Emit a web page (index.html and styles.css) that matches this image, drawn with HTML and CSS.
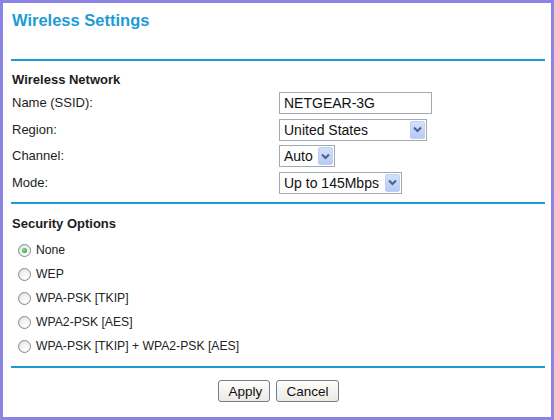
FILE: index.html
```html
<!DOCTYPE html>
<html lang="en">
<head>
<meta charset="utf-8">
<title>Wireless Settings</title>
<link rel="stylesheet" href="styles.css">
</head>
<body>
<div class="frame">
  <h1 class="title">Wireless Settings</h1>
  <hr class="rule rule-top">

  <h2 class="section-head section-head-network">Wireless Network</h2>
  <div class="form-grid">
    <label class="field-label" for="ssid">Name (SSID):</label>
    <input class="text-input" id="ssid" type="text" value="NETGEAR-3G">

    <span class="field-label">Region:</span>
    <div class="select select-region">
      <span class="select-value">United States</span>
      <span class="select-arrow"><svg width="9" height="7" viewBox="0 0 9 7"><path d="M1 1.5 L4.5 5 L8 1.5" fill="none" stroke="#4a5f8c" stroke-width="2"/></svg></span>
    </div>

    <span class="field-label">Channel:</span>
    <div class="select select-channel">
      <span class="select-value">Auto</span>
      <span class="select-arrow"><svg width="9" height="7" viewBox="0 0 9 7"><path d="M1 1.5 L4.5 5 L8 1.5" fill="none" stroke="#4a5f8c" stroke-width="2"/></svg></span>
    </div>

    <span class="field-label">Mode:</span>
    <div class="select select-mode">
      <span class="select-value">Up to 145Mbps</span>
      <span class="select-arrow"><svg width="9" height="7" viewBox="0 0 9 7"><path d="M1 1.5 L4.5 5 L8 1.5" fill="none" stroke="#4a5f8c" stroke-width="2"/></svg></span>
    </div>
  </div>

  <hr class="rule rule-mid">

  <h2 class="section-head section-head-security">Security Options</h2>
  <div class="radio-list">
    <label class="radio-row"><input class="radio" type="radio" name="sec" checked><span>None</span></label>
    <label class="radio-row"><input class="radio" type="radio" name="sec"><span>WEP</span></label>
    <label class="radio-row"><input class="radio" type="radio" name="sec"><span>WPA-PSK [TKIP]</span></label>
    <label class="radio-row"><input class="radio" type="radio" name="sec"><span>WPA2-PSK [AES]</span></label>
    <label class="radio-row"><input class="radio" type="radio" name="sec"><span>WPA-PSK [TKIP] + WPA2-PSK [AES]</span></label>
  </div>

  <hr class="rule rule-bottom">

  <div class="actions">
    <button class="btn btn-apply" type="button">Apply</button>
    <button class="btn btn-cancel" type="button">Cancel</button>
  </div>
</div>
</body>
</html>
```
FILE: styles.css
```css
body {
  margin: 0;
  background: #fff;
}

.frame {
  box-sizing: border-box;
  width: 554px;
  height: 420px;
  border: 3px solid #8c84e4;
  background: #fff;
  padding: 7px 6px 0 8px;
  font-family: "Liberation Sans", Arial, sans-serif;
  color: #1c1c1c;
}

.title {
  margin: 0;
  padding-left: 1px;
  font-size: 16.5px;
  line-height: 20px;
  font-weight: bold;
  color: #1e9bd7;
}

.rule {
  border: 0;
  height: 2px;
  margin: 0;
  background: #1c9ad1;
}

.rule-top { margin-top: 29px; }
.rule-mid { margin-top: 8.5px; }
.rule-bottom { margin-top: 8px; }

.section-head {
  margin: 0;
  padding-left: 1px;
  font-size: 13px;
  line-height: 16px;
  font-weight: bold;
  color: #1c1c1c;
}

.section-head-network { margin-top: 11px; }
.section-head-security { margin-top: 12px; }

.form-grid {
  margin-top: 4px;
  display: grid;
  grid-template-columns: 268px auto;
  grid-auto-rows: 22px;
  row-gap: 4.5px;
  align-items: center;
  justify-items: start;
}

.field-label {
  padding-left: 1px;
  font-size: 13px;
  line-height: 16px;
}

.text-input {
  box-sizing: border-box;
  width: 153px;
  height: 22px;
  margin: 0;
  padding: 0 4px;
  border: 1px solid #a3a9b1;
  font-family: "Liberation Sans", Arial, sans-serif;
  font-size: 14px;
  color: #111;
  background: #fff;
}

.select {
  box-sizing: border-box;
  height: 22px;
  display: flex;
  align-items: center;
  justify-content: space-between;
  border: 1px solid #a3a9b1;
  padding: 0 1px 0 4px;
  background: #fff;
  font-size: 14px;
  color: #111;
}

.select-region { width: 148px; }
.select-channel { width: 56px; }
.select-mode { width: 123px; }

.select-arrow {
  box-sizing: border-box;
  width: 15px;
  height: 18px;
  display: flex;
  align-items: center;
  justify-content: center;
  border: 1px solid #bfd0f4;
  border-radius: 2px;
  background: linear-gradient(#d3e0fb, #b7cbf3);
}

.radio-list {
  margin-top: 6px;
  display: flex;
  flex-direction: column;
}

.radio-row {
  height: 24px;
  display: flex;
  align-items: center;
  gap: 5px;
  padding-left: 7px;
  font-size: 12.2px;
  line-height: 24px;
  color: #222;
}

.radio {
  -webkit-appearance: none;
  appearance: none;
  box-sizing: border-box;
  width: 13px;
  height: 13px;
  margin: 0;
  border-radius: 50%;
  border: 1px solid #7f8b98;
  background: radial-gradient(circle at 65% 70%, #ffffff 0, #f4f4f1 40%, #d6d6d0 100%);
  display: flex;
  align-items: center;
  justify-content: center;
}

.radio:checked::after {
  content: "";
  width: 5px;
  height: 5px;
  border-radius: 50%;
  background: radial-gradient(circle at 40% 40%, #9be48f 0, #3fb24a 55%, #2a9136 100%);
}

.actions {
  margin-top: 12px;
  display: flex;
  justify-content: center;
  gap: 6px;
}

.btn {
  box-sizing: border-box;
  height: 22px;
  margin: 0;
  padding: 0 10px;
  border: 1px solid #6e7e90;
  border-radius: 3px;
  background: linear-gradient(#fdfdfb, #ebeae5);
  font-family: "Liberation Sans", Arial, sans-serif;
  font-size: 13.5px;
  color: #111;
}

.btn-apply { width: 52px; }
.btn-cancel { width: 63px; }
```
